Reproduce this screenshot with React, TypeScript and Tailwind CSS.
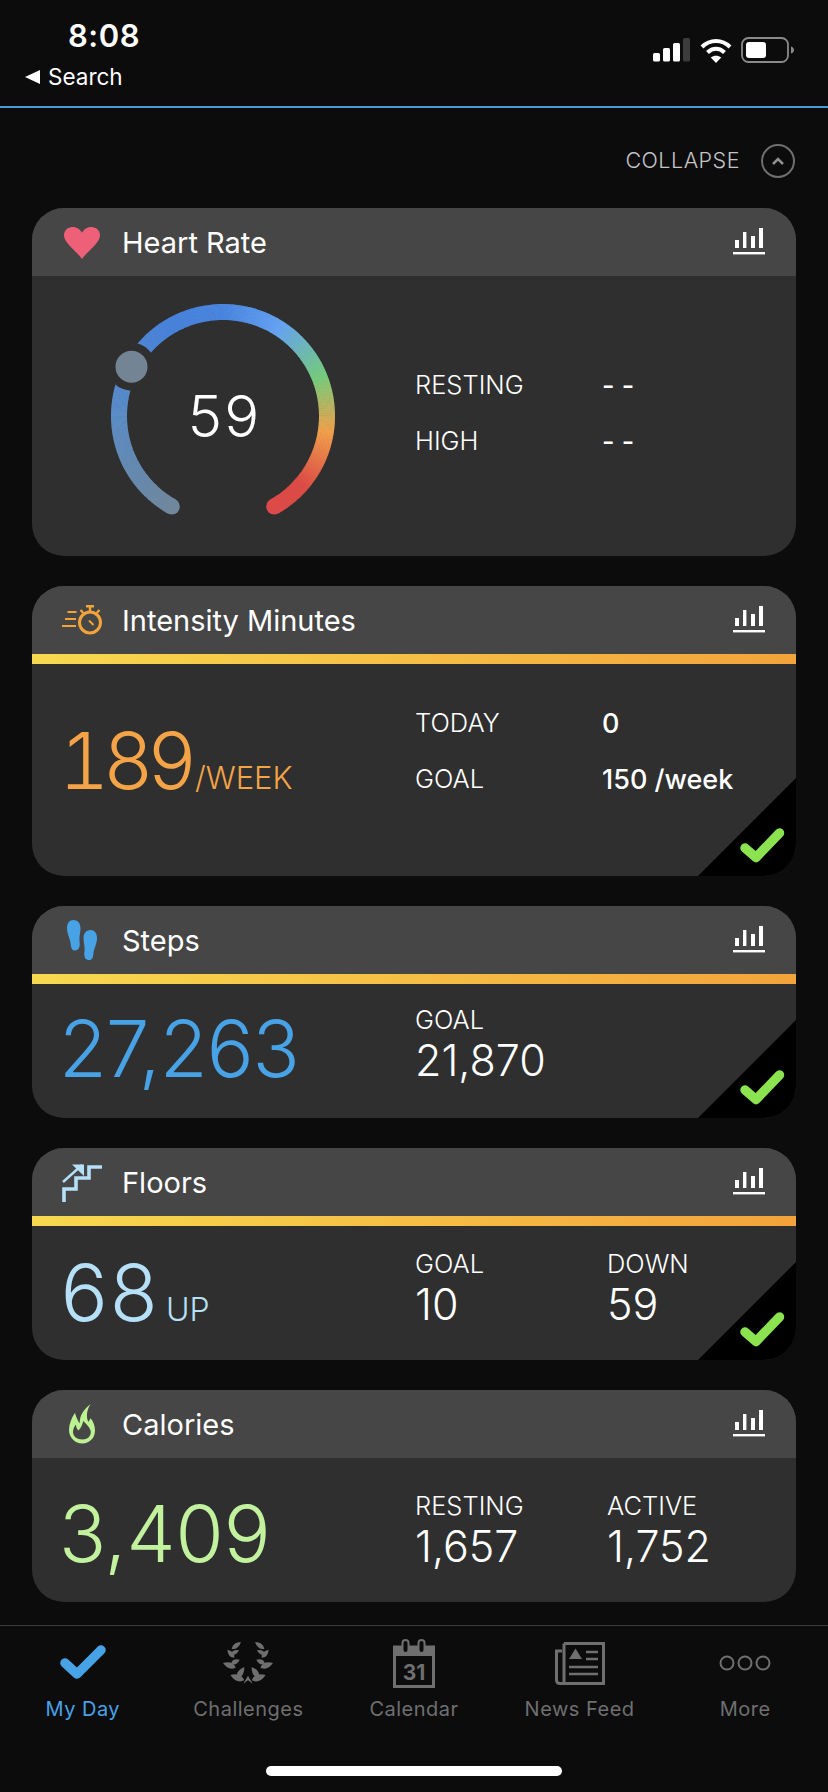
import type { ReactNode } from 'react';

const FONT = "font-['Inter','Liberation_Sans',sans-serif]";

// colour stops along the gauge, degrees clockwise from 12 o'clock
const GAUGE_STOPS: [number, number[]][] = [
  [209, [112, 136, 158]],
  [270, [91, 140, 198]],
  [330, [72, 130, 218]],
  [360, [74, 133, 224]],
  [392, [102, 163, 242]],
  [428, [118, 204, 124]],
  [458, [240, 160, 76]],
  [490, [220, 76, 70]],
  [511, [222, 74, 72]],
];

function gaugeColor(a: number): string {
  for (let i = 0; i < GAUGE_STOPS.length - 1; i++) {
    const [a0, c0] = GAUGE_STOPS[i];
    const [a1, c1] = GAUGE_STOPS[i + 1];
    if (a <= a1) {
      const t = Math.max(0, (a - a0) / (a1 - a0));
      const c = c0.map((v, j) => Math.round(v + (c1[j] - v) * t));
      return `rgb(${c[0]},${c[1]},${c[2]})`;
    }
  }
  return 'rgb(222,74,72)';
}

function pt(a: number, r = 104): [number, number] {
  const rad = (a * Math.PI) / 180;
  return [120 + r * Math.sin(rad), 120 - r * Math.cos(rad)];
}

function Gauge() {
  const segs = [];
  for (let a = 209.5; a < 510.5; a += 1) {
    const [x0, y0] = pt(a);
    const [x1, y1] = pt(Math.min(a + 1.3, 510.5));
    segs.push(
      <path
        key={a}
        d={`M${x0} ${y0}A104 104 0 0 1 ${x1} ${y1}`}
        stroke={gaugeColor(a)}
        strokeWidth={16}
        fill="none"
      />,
    );
  }
  const [sx, sy] = pt(209.5);
  const [ex, ey] = pt(510.5);
  return (
    <div className="relative h-[240px] w-[240px] shrink-0">
      <svg width="240" height="240" viewBox="0 0 240 240">
        {segs}
        <circle cx={sx} cy={sy} r="8" fill={gaugeColor(209.5)} />
        <circle cx={ex} cy={ey} r="8" fill={gaugeColor(510)} />
        <circle cx="28.5" cy="70.7" r="24" fill="#2f2f2f" />
        <circle cx="28.5" cy="70.7" r="16" fill="#738494" />
      </svg>
      <div className="absolute inset-0 flex items-center justify-center text-[58px] leading-none font-light tracking-[-1px] text-white tabular-nums">
        59
      </div>
    </div>
  );
}

function ChartIcon() {
  return (
    <svg width="32" height="28" viewBox="0 0 32 28" className="shrink-0" fill="#fff">
      <rect x="2" y="12" width="4" height="8" />
      <rect x="10" y="4" width="3.4" height="16" />
      <rect x="18" y="8" width="4" height="12" />
      <rect x="26" y="0" width="4" height="20" />
      <rect x="0" y="24" width="32" height="2.4" />
    </svg>
  );
}

function Heart() {
  return (
    <svg width="36" height="32" viewBox="0 0 36 32" className="mt-[2px]">
      <path
        d="M18 32C13 24.500 0 16 0 8.500 0 3.500 3.800 0 8.500 0 12.800 0 16.200 2.300 18 5.800 19.800 2.300 23.200 0 27.500 0 32.200 0 36 3.500 36 8.500 36 16 23 24.500 18 32Z"
        fill="#ee5f78"
      />
    </svg>
  );
}

function Stopwatch() {
  return (
    <svg width="40" height="30" viewBox="0 0 40 30" fill="none" stroke="#f4a23a">
      <circle cx="28" cy="17.500" r="10.500" strokeWidth="3" />
      <path d="M24 1.200h8M28 1.200v5" strokeWidth="2.400" />
      <path d="M18.500 5l2.800 3M37.500 5l-2.800 3" strokeWidth="2.400" />
      <path d="M27 15.500l4.500 4.500" strokeWidth="2" />
      <path d="M5.500 7h9M3 14h11M0 21h14" strokeWidth="2" />
    </svg>
  );
}

function Feet() {
  return (
    <svg width="30" height="40" viewBox="0 0 30 40" fill="#48a2e6">
      <path d="M6.500 0C11 0 13.500 3.500 13.500 8.500 13.500 13 12 16 12.500 21 13 25 13 30 8.500 30.500 4.500 31 4 27 3.500 23 3 18 0 14 0 8 0 3 2.500 0 6.500 0Z" />
      <path d="M23.500 10C27.500 10 30 13 30 18 30 24 27 28 26.500 33 26 37 25.500 40.500 21.500 40 17 39.500 17 35 17.500 31 18 26 16.500 23 16.500 18.500 16.500 13.500 19 10 23.500 10Z" />
    </svg>
  );
}

function Stairs() {
  return (
    <svg width="40" height="40" viewBox="0 0 40 40" fill="none" stroke="#b5e0f8">
      <path d="M2 40V27H14V16H27V5H40" strokeWidth="3.600" />
      <path d="M1 20L20 3" strokeWidth="2.400" />
      <path d="M10 2.500H22V14Z" fill="#b5e0f8" stroke="none" />
    </svg>
  );
}

function Flame() {
  return (
    <svg width="26" height="40" viewBox="0 0 26 40">
      <path
        fillRule="evenodd"
        fill="#bdf293"
        d="M21.700 0C15 5 10.500 11 10.700 19.500 8.500 16 6.800 12.500 6 8.700 2.500 14 0 20 0 26 0 33.500 6 39.500 13.300 39.500 20.500 39.500 26 34 26 26.500 26 22 24.500 18 21.700 14.300L19.300 18C16.800 12 18 5.500 21.700 0ZM6.700 20.500C5 23 4 25.500 4 28 4 32.500 8 35.500 13.300 35.500 18.500 35.500 21.800 32.500 21.800 28 21.800 25 19 21.500 14.300 17 13.500 20.500 12 24 9.300 26.500 8 25 7.200 23 6.700 20.500Z"
      />
    </svg>
  );
}

function CornerCheck() {
  return (
    <svg
      width="98"
      height="98"
      viewBox="0 0 98 98"
      className="absolute right-0 bottom-0"
    >
      <polygon points="98,0 98,98 0,98" fill="#000" />
      <path
        d="M47 70L58 79.500L81.500 55"
        fill="none"
        stroke="#8ae34f"
        strokeWidth="9.500"
        strokeLinejoin="round"
        strokeLinecap="round"
      />
    </svg>
  );
}

function Card({
  title,
  icon,
  bar,
  check,
  bodyClass,
  children,
}: {
  title: string;
  icon: ReactNode;
  bar?: boolean;
  check?: boolean;
  bodyClass: string;
  children: ReactNode;
}) {
  return (
    <section className="relative mx-[32px] overflow-hidden rounded-[32px] bg-[#2f2f2f]">
      <div className="flex h-[68px] items-center bg-[#464646] pr-[31px] pl-[30px]">
        <div className="flex w-[40px] justify-center">{icon}</div>
        <h2 className="ml-[20px] flex-1 text-[29px] leading-none font-normal text-white">{title}</h2>
        <ChartIcon />
      </div>
      {bar && <div className="h-[10px] bg-linear-to-r from-[#f7d94e] to-[#f2a33b]" />}
      <div className={`flex items-center ${bodyClass}`}>{children}</div>
      {check && <CornerCheck />}
    </section>
  );
}

function Row({ label, value }: { label: string; value: string }) {
  return (
    <div className="flex h-[56px] items-center">
      <span className="w-[187px] text-[25.500px] leading-none font-light text-white">{label}</span>
      <span className="text-[27px] leading-none font-medium text-white">{value}</span>
    </div>
  );
}

function Stat({ label, value }: { label: string; value: string }) {
  return (
    <div className="flex w-[192px] flex-col">
      <span className="h-[30px] text-[25.500px] leading-[30px] font-light text-white">{label}</span>
      <span className="h-[50px] text-[43px] leading-[50px] font-light text-white">{value}</span>
    </div>
  );
}

function Tab({
  label,
  active,
  children,
}: {
  label: string;
  active?: boolean;
  children: ReactNode;
}) {
  return (
    <div className="flex w-[165.6px] flex-col items-center">
      <div className="flex h-[52px] items-center justify-center">{children}</div>
      <span
        className={`mt-[6px] text-[20px] leading-[28px] tracking-[0.5px] ${active ? 'text-[#48a2e6]' : 'text-[#6f6f6f]'}`}
      >
        {label}
      </span>
    </div>
  );
}

// [base x, base y, tip x, tip y, thickness] in a 3x drawing grid, left branch only
const LAUREL_LEAVES = [
  [38, 36, 66, 15, 14],
  [46, 62, 25, 38, -14],
  [36, 52, 60, 40, 12],
  [50, 92, 12, 78, -17],
  [36, 80, 62, 68, 14],
  [76, 130, 34, 114, -19],
  [54, 124, 76, 90, 17],
];

function leafPath(x0: number, y0: number, x1: number, y1: number, w: number, mirror: boolean): string {
  const m = (x: number) => (mirror ? 174 - x : x);
  const dx = x1 - x0;
  const dy = y1 - y0;
  const len = Math.hypot(dx, dy);
  const nx = (-dy / len) * w;
  const ny = (dx / len) * w;
  const cx = x0 + dx * 0.4;
  const cy = y0 + dy * 0.4;
  return `M${m(x0)} ${y0}Q${m(cx + nx)} ${cy + ny} ${m(x1)} ${y1}Q${m(cx - nx)} ${cy - ny} ${m(x0)} ${y0}Z`;
}

function Laurel() {
  return (
    <svg width="50" height="42" viewBox="12 15 150 126" fill="#6f6f6f">
      {LAUREL_LEAVES.map(([x0, y0, x1, y1, w], i) => (
        <g key={i}>
          <path d={leafPath(x0, y0, x1, y1, w, false)} />
          <path d={leafPath(x0, y0, x1, y1, w, true)} />
        </g>
      ))}
      <path d="M73 140L87 116L101 140L87 130Z" />
    </svg>
  );
}

function CalendarIcon() {
  return (
    <svg width="42" height="49" viewBox="0 0 42 49" fill="none">
      <path d="M0 7H42V17H0Z" fill="#6f6f6f" />
      <rect x="1.500" y="8" width="39" height="39.500" stroke="#6f6f6f" strokeWidth="3" />
      <rect x="9.500" y="1" width="6" height="13" rx="3" fill="#0c0c0d" stroke="#6f6f6f" strokeWidth="2" />
      <rect x="25.500" y="1" width="6" height="13" rx="3" fill="#0c0c0d" stroke="#6f6f6f" strokeWidth="2" />
      <text
        x="21"
        y="41"
        textAnchor="middle"
        fontSize="21"
        fontWeight="700"
        fontFamily="Inter, sans-serif"
        fill="#6f6f6f"
      >
        31
      </text>
    </svg>
  );
}

function NewsIcon() {
  return (
    <svg width="50" height="43" viewBox="0 0 50 43" fill="none" stroke="#6f6f6f">
      <path d="M9 1.500H48.500V41.500H5C2.500 41.500 1.500 40 1.500 38V9H7" strokeWidth="3" />
      <path d="M9 1.500V41" strokeWidth="3" />
      <path d="M14 17L20.500 6.500L27 17Z" fill="#6f6f6f" stroke="none" />
      <path d="M31 10H43M31 17H43M14 25H43M14 32H43" strokeWidth="2.400" />
    </svg>
  );
}

function StatusIcons() {
  return (
    <div className="flex items-center">
      <svg width="37" height="24" viewBox="0 0 37 24" fill="#fff">
        <rect x="0" y="15" width="7" height="8.500" rx="1.500" />
        <rect x="10" y="10" width="7" height="13.500" rx="1.500" />
        <rect x="20" y="5" width="7" height="18.500" rx="1.500" />
        <rect x="30" y="0" width="7" height="23.500" rx="1.500" fill="#3c3c3c" />
      </svg>
      <svg width="32" height="25" viewBox="0 0 32 25" className="ml-[10px]" fill="none" stroke="#fff" strokeWidth="4">
        <path d="M2 9C10 1 22 1 30 9" />
        <path d="M7.500 14.500C12.500 9.500 19.500 9.500 24.500 14.500" />
        <path d="M16 25L10.800 19.500C13.800 17 18.200 17 21.200 19.500Z" fill="#fff" stroke="none" />
      </svg>
      <svg width="54" height="26" viewBox="0 0 54 26" className="ml-[9px]" fill="none">
        <rect x="1" y="1" width="46" height="24" rx="6.500" stroke="#8a8a8a" strokeWidth="1.800" />
        <rect x="5" y="5" width="20" height="16" rx="3" fill="#fff" />
        <path d="M50 9.500C52 10 53 11.500 53 13 53 14.500 52 16 50 16.500Z" fill="#8a8a8a" />
      </svg>
    </div>
  );
}

export default function App() {
  return (
    <div className={`flex h-[1792px] w-[828px] flex-col overflow-hidden bg-[#0c0c0d] ${FONT}`}>
      <header className="h-[108px] shrink-0 border-b-2 border-[#4a9ad9]">
        <div className="flex items-start justify-between pr-[33px] pl-[25px]">
          <div>
            <div className="mt-[18px] ml-[43px] text-[31px] leading-[36px] font-semibold tracking-[0.5px] text-white">
              8:08
            </div>
            <div className="mt-[10px] flex items-center text-[22.500px] leading-[26px] text-white">
              <svg width="15" height="14" viewBox="0 0 15 14" fill="#fff">
                <path d="M15 0V14L0 7Z" />
              </svg>
              <span className="ml-[8px]">Search</span>
            </div>
          </div>
          <div className="mt-[37px]">
            <StatusIcons />
          </div>
        </div>
      </header>

      <div className="flex h-[100px] shrink-0 items-center justify-end pt-[6px] pr-[33px]">
        <span className="text-[21.500px] leading-none font-light tracking-[0.5px] text-[#c4c4c4]">COLLAPSE</span>
        <span className="ml-[21px] flex h-[34px] w-[34px] items-center justify-center rounded-full border-2 border-[#6f6f6f]">
          <svg width="14" height="10" viewBox="0 0 14 10" fill="none" stroke="#8f8f8f" strokeWidth="2.500">
            <path d="M2 8L7 3L12 8" />
          </svg>
        </span>
      </div>

      <main className="flex flex-col gap-[30px]">
        <Card title="Heart Rate" icon={<Heart />} bodyClass="h-[280px] pl-[71px]">
          <Gauge />
          <div className="mb-[6px] ml-[72px] flex flex-col">
            <Row label="RESTING" value="- -" />
            <Row label="HIGH" value="- -" />
          </div>
        </Card>

        <Card title="Intensity Minutes" icon={<Stopwatch />} bar check bodyClass="h-[212px] pl-[27px]">
          <div className="mb-[18px] flex w-[356px] shrink-0 items-baseline text-[#f4a447]">
            <span className="text-[78px] leading-none font-light tracking-[-6.500px] tabular-nums">189</span>
            <span className="ml-[4px] text-[31px] leading-none font-light">/WEEK</span>
          </div>
          <div className="mb-[38px] flex flex-col">
            <Row label="TODAY" value="0" />
            <Row label="GOAL" value="150 /week" />
          </div>
        </Card>

        <Card title="Steps" icon={<Feet />} bar check bodyClass="h-[134px] pl-[27px]">
          <div className="mb-[4px] w-[356px] shrink-0 text-[78px] leading-none font-light tracking-[-1px] text-[#48a2e6]">
            27,263
          </div>
          <div className="mb-[12px] flex">
            <Stat label="GOAL" value="21,870" />
          </div>
        </Card>

        <Card title="Floors" icon={<Stairs />} bar check bodyClass="h-[134px] pl-[27px]">
          <div className="flex w-[356px] shrink-0 items-baseline text-[#b5e0f8]">
            <span className="text-[78px] leading-none font-light tracking-[-1px] tabular-nums">68</span>
            <span className="ml-[8px] text-[32px] leading-none font-light">UP</span>
          </div>
          <div className="mb-[8px] flex">
            <Stat label="GOAL" value="10" />
            <Stat label="DOWN" value="59" />
          </div>
        </Card>

        <Card title="Calories" icon={<Flame />} bodyClass="h-[144px] pl-[27px]">
          <div className="mt-[8px] w-[356px] shrink-0 text-[78px] leading-none font-light text-[#c3f29e]">3,409</div>
          <div className="mt-[2px] flex">
            <Stat label="RESTING" value="1,657" />
            <Stat label="ACTIVE" value="1,752" />
          </div>
        </Card>
      </main>

      <nav className="mt-auto flex h-[167px] shrink-0 flex-col border-t border-[#3a3a3a] pt-[11px]">
        <div className="flex">
          <Tab label="My Day" active>
            <svg width="46" height="36" viewBox="0 0 46 36" fill="none">
              <path
                d="M5 18L17 29L41 5"
                stroke="#48a2e6"
                strokeWidth="9.500"
                strokeLinecap="round"
                strokeLinejoin="round"
              />
            </svg>
          </Tab>
          <Tab label="Challenges">
            <Laurel />
          </Tab>
          <Tab label="Calendar">
            <CalendarIcon />
          </Tab>
          <Tab label="News Feed">
            <NewsIcon />
          </Tab>
          <Tab label="More">
            <svg width="52" height="16" viewBox="0 0 52 16" fill="none" stroke="#6f6f6f" strokeWidth="2">
              <circle cx="8" cy="8" r="6.500" />
              <circle cx="26" cy="8" r="6.500" />
              <circle cx="44" cy="8" r="6.500" />
            </svg>
          </Tab>
        </div>
        <div className="mx-auto mt-[43px] h-[10px] w-[296px] rounded-full bg-white" />
      </nav>
    </div>
  );
}
